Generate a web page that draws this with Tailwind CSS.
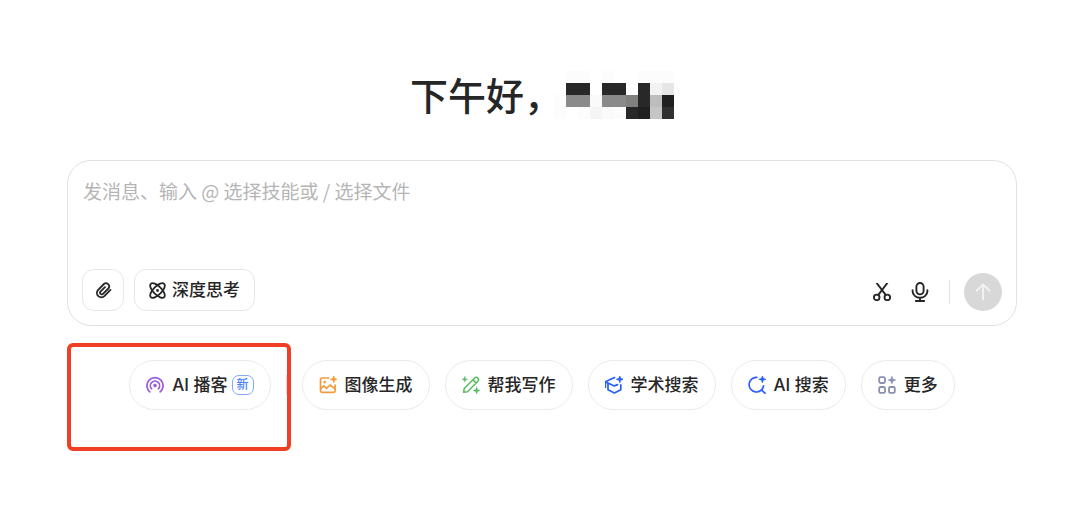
<!DOCTYPE html>
<html lang="zh-CN">
<head>
    <meta charset="UTF-8">
    <meta name="viewport" content="width=device-width, initial-scale=1.0">
    <title>AI 助手</title>
    <script src="https://cdn.jsdelivr.net/npm/@tailwindcss/browser@4"></script>
</head>
<body class="bg-white text-[#262626] font-['Inter','Noto_Sans_CJK_SC',sans-serif]">

    <main class="pt-[71px] pl-[67px] pr-[63px] pb-24">

        <!-- Greeting -->
        <header class="flex justify-center items-start gap-1 h-12">
            <h1 class="text-[38px] leading-[46px] font-medium font-['Noto_Sans_CJK_SC',sans-serif]">下午好，</h1>
            <!-- Masked user name -->
            <svg class="w-27 h-12 overflow-visible" viewBox="0 0 9 4" shape-rendering="crispEdges" role="img" aria-label="用户名">
                <path fill="#fcfcfc" d="M-1 2h1v2h-1zM0 0h2v1h-2zM3 0h1v1h-1zM6 0h3v1h-3zM1 3h1v1h-1zM4 3h1v1h-1z" />
                <path fill="#f5f5f5" d="M2 3h1v1h-1z" />
                <path fill="#fafafa" d="M2 2h1v1h-1zM3 3h1v1h-1z" />
                <path fill="#282828" d="M0 1h2v1h-2zM3 1h2v1h-2zM6 1h1v2h-1zM5 3h1v1h-1z" />
                <path fill="#8a8a8a" d="M0 2h2v1h-2zM3 2h2v1h-2z" />
                <path fill="#80807e" d="M5 2h1v1h-1z" />
                <path fill="#202020" d="M6 3h1v1h-1zM8 2h1v1h-1z" />
                <path fill="#303030" d="M8 3h1v1h-1z" />
                <path fill="#f2f2f2" d="M7 1h1v1h-1z" />
                <path fill="#e6e6e6" d="M8 1h1v1h-1z" />
                <path fill="#bdbdbb" d="M7 2h1v1h-1z" />
                <path fill="#c5c5c5" d="M7 3h1v1h-1z" />
            </svg>
        </header>

        <!-- Message box -->
        <form class="mt-[41px] border border-[#e2e2e2] rounded-3xl px-[14px] pt-4 pb-[14px]">
            <textarea aria-label="消息" placeholder="发消息、输入 @ 选择技能或 / 选择文件" class="block w-full h-23 resize-none outline-none text-[19px] leading-7 placeholder:text-[#b5b5b5] pl-px font-['Noto_Sans_CJK_SC',sans-serif]"></textarea>
            <div class="flex items-end justify-between">
                <div class="flex gap-[10px]">
                    <button type="button" aria-label="附件" class="size-[42px] flex items-center justify-center border border-[#e8e8e8] rounded-xl">
                        <svg class="size-[17px]" viewBox="0 0 24 24" fill="none" stroke="currentColor" stroke-width="2.6" stroke-linecap="round" stroke-linejoin="round">
                            <path d="M21.8 11.2l-8.6 8.7a6.2 6.2 0 0 1-9-8.5l8.4-8.6a4.5 4.5 0 0 1 6.6 6l-8.3 8.2a2.4 2.4 0 0 1-3.5-3.1l6.6-6.6" />
                        </svg>
                    </button>
                    <button type="button" class="h-[42px] px-[14px] flex items-center gap-1.5 border border-[#e8e8e8] rounded-xl text-[17px] leading-6 font-medium">
                        <svg class="size-[17px]" viewBox="0 0 18 18" fill="none" stroke="currentColor" stroke-width="1.9">
                            <ellipse cx="9" cy="9" rx="10" ry="4.4" transform="rotate(45 9 9)" />
                            <ellipse cx="9" cy="9" rx="10" ry="4.4" transform="rotate(-45 9 9)" />
                            <circle cx="9" cy="9" r="1.5" fill="currentColor" stroke="none" />
                        </svg>
                        深度思考
                    </button>
                </div>
                <div class="flex items-center">
                    <button type="button" aria-label="截图" class="mr-5">
                        <svg class="size-[18px]" viewBox="0 0 18 18" fill="none" stroke="currentColor" stroke-width="1.9" stroke-linecap="round">
                            <circle cx="3.7" cy="14.4" r="2.8" />
                            <circle cx="14.3" cy="14.4" r="2.8" />
                            <path d="M3.8 0.2l8.9 11.6M14.2 0.2L5.3 11.8" />
                        </svg>
                    </button>
                    <button type="button" aria-label="语音输入" class="mr-5">
                        <svg class="w-[18px] h-5" viewBox="0 0 18 20" fill="none" stroke="currentColor" stroke-width="1.9" stroke-linecap="round">
                            <rect x="5.4" y="1" width="7.2" height="11.4" rx="3.6" />
                            <path d="M1.6 8.2v1a7.4 6.6 0 0 0 14.8 0v-1M9 15.8v3M4.8 19h8.4" />
                        </svg>
                    </button>
                    <span class="w-px h-6 bg-[#e2e2e2] mr-[14px]"></span>
                    <button type="submit" aria-label="发送" class="size-[38px] rounded-full bg-[#d8d8d8] text-[#f2f2f2] flex items-center justify-center">
                        <svg class="size-[18px]" viewBox="0 0 18 18" fill="none" stroke="currentColor" stroke-width="2" stroke-linecap="round" stroke-linejoin="round">
                            <path d="M9 16.5V1.5M2.6 7.8L9 1.5l6.4 6.3" />
                        </svg>
                    </button>
                </div>
            </div>
        </form>

        <!-- Skills -->
        <nav class="relative mt-[34px] flex justify-center items-center gap-[15px] text-[17px] leading-6 font-medium whitespace-nowrap">
            <button class="h-[50px] px-4 flex items-center gap-2 border border-[#ebebeb] rounded-full">
                <svg class="size-[18px] text-[#9b5bdc]" viewBox="0 0 18 18" fill="none" stroke="currentColor" stroke-width="1.7" stroke-linecap="round">
                    <path d="M3.8 15.9a8.1 8.1 0 1 1 10.4 0" />
                    <path d="M5.6 12.8a4.6 4.6 0 1 1 6.8 0" />
                    <circle cx="9" cy="9.6" r="1.8" fill="currentColor" stroke="none" />
                </svg>
                <span class="flex items-center gap-1">AI 播客
                    <span class="w-[22px] h-5 flex items-center justify-center border border-[#86a8ff] rounded-[7px] text-xs leading-4 text-[#4c83ff]">新</span>
                </span>
            </button>
            <span class="w-px h-5 bg-[#e0e0e0]"></span>
            <button class="h-[50px] px-4 flex items-center gap-2 border border-[#ebebeb] rounded-full">
                <svg class="size-[18px] text-[#f49b3b]" viewBox="0 0 18 18" fill="none" stroke="currentColor" stroke-width="1.7" stroke-linecap="round" stroke-linejoin="round">
                    <path d="M9.6 2H3a1.5 1.5 0 0 0-1.5 1.5v11.3A1.5 1.5 0 0 0 3 16.3h11.6a1.5 1.5 0 0 0 1.5-1.5V9" />
                    <path d="M1.8 12.6l3-2.7 2.7 2.4 3.5-3.3 4.9 3.6" />
                    <circle cx="5.7" cy="6.1" r="1.4" fill="currentColor" stroke="none" />
                    <path d="M14.8-.4l1 2.7 2.7 1-2.7 1-1 2.7-1-2.7-2.7-1 2.7-1z" fill="currentColor" stroke="currentColor" stroke-width=".5" />
                </svg>
                图像生成
            </button>
            <button class="h-[50px] px-4 flex items-center gap-2 border border-[#ebebeb] rounded-full">
                <svg class="size-[18px] text-[#5bbd62]" viewBox="0 0 18 18" fill="none" stroke="currentColor" stroke-width="1.6" stroke-linecap="round" stroke-linejoin="round">
                    <path d="M1.7 16.3l.5-3.8L12.7 2a2.2 2.2 0 0 1 3.2 3.2L5.5 15.8zM11 3.8l3.1 3.1" />
                    <path d="M2.8.5l.8 2 2 .8-2 .8-.8 2-.8-2-2-.8 2-.8z" fill="currentColor" stroke="currentColor" stroke-width=".4" />
                    <path d="M14.6 10.9l1 2.6 2.6 1-2.6 1-1 2.6-1-2.6-2.6-1 2.6-1z" fill="currentColor" stroke="currentColor" stroke-width=".4" />
                </svg>
                帮我写作
            </button>
            <button class="h-[50px] px-4 flex items-center gap-2 border border-[#ebebeb] rounded-full">
                <svg class="size-[18px] text-[#2b5ff5]" viewBox="0 0 18 18" fill="none" stroke="currentColor" stroke-width="1.7" stroke-linecap="round" stroke-linejoin="round">
                    <path d="M9.6 1.6L.4 5.8v5.4" />
                    <path d="M.6 5.9l8.8 4 3.1-1.3" />
                    <path d="M3 7.4v6.3l6.4 3.2 6.4-3.2V8.8" />
                    <path d="M14.8-.4l1 2.7 2.7 1-2.7 1-1 2.7-1-2.7-2.7-1 2.7-1z" fill="currentColor" stroke="currentColor" stroke-width=".5" />
                </svg>
                学术搜索
            </button>
            <button class="h-[50px] px-4 flex items-center gap-2 border border-[#ebebeb] rounded-full">
                <svg class="size-[18px] text-[#2b5ff5]" viewBox="0 0 18 18" fill="none" stroke="currentColor" stroke-width="1.7" stroke-linecap="round">
                    <path d="M8.8 1.4a7.3 7.3 0 1 0 6.8 8.4M13.6 14l3.4 3.2" />
                    <path d="M14.4-.4l1 2.7 2.7 1-2.7 1-1 2.7-1-2.7-2.7-1 2.7-1z" fill="currentColor" stroke="currentColor" stroke-width=".5" />
                </svg>
                AI 搜索
            </button>
            <button class="h-[50px] px-4 flex items-center gap-2 border border-[#ebebeb] rounded-full">
                <svg class="size-[18px] text-[#8b8fb0]" viewBox="0 0 18 18" fill="none" stroke="currentColor" stroke-width="1.8">
                    <rect x="1.2" y="1.2" width="5.8" height="5.8" rx="1.4" />
                    <rect x="1.2" y="11" width="5.8" height="5.8" rx="1.4" />
                    <rect x="11" y="11" width="5.8" height="5.8" rx="1.4" />
                    <path d="M13.9.2l1.1 2.8 2.8 1.1L15 5.2 13.9 8l-1.1-2.8L10 4.1 12.8 3z" fill="currentColor" stroke="currentColor" stroke-width=".5" />
                </svg>
                更多
            </button>

            <!-- Highlight frame -->
            <span class="absolute left-0 -top-[17px] w-56 h-27 border-4 border-[#ef4026] rounded-md pointer-events-none"></span>
        </nav>
    </main>

</body>
</html>
